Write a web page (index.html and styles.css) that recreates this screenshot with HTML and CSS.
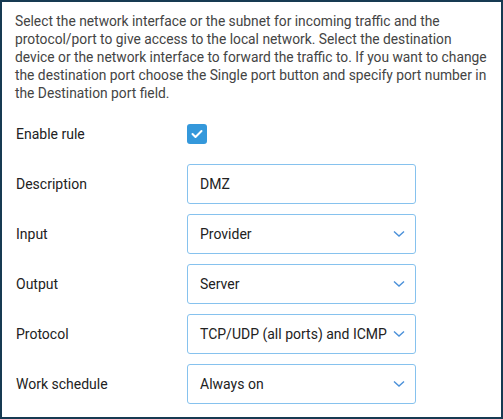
FILE: index.html
```html
<!DOCTYPE html>
<html>
<head>
<meta charset="utf-8">
<link rel="stylesheet" href="styles.css">
</head>
<body>
<div class="frame">
  <p class="intro">Select the network interface or the subnet for incoming traffic and the protocol/port to give access to the local network. Select the destination device or the network interface to forward the traffic to. If you want to change the destination port choose the Single port button and specify port number in the Destination port field.</p>
  <div class="form">
    <div class="row">
      <div class="label">Enable rule</div>
      <div class="field"><span class="check"><svg width="12" height="10" viewBox="0 0 12 10"><path d="M1.5 5 L4.5 8 L10.5 2" fill="none" stroke="#fff" stroke-width="2" stroke-linecap="round" stroke-linejoin="round"/></svg></span></div>
    </div>
    <div class="row">
      <div class="label">Description</div>
      <div class="field"><div class="box">DMZ</div></div>
    </div>
    <div class="row">
      <div class="label">Input</div>
      <div class="field"><div class="box select"><span>Provider</span><svg class="chev" width="12" height="8" viewBox="0 0 12 8"><path d="M1 1.5 L6 6 L11 1.5" fill="none" stroke="#4a90d9" stroke-width="1.4"/></svg></div></div>
    </div>
    <div class="row">
      <div class="label">Output</div>
      <div class="field"><div class="box select"><span>Server</span><svg class="chev" width="12" height="8" viewBox="0 0 12 8"><path d="M1 1.5 L6 6 L11 1.5" fill="none" stroke="#4a90d9" stroke-width="1.4"/></svg></div></div>
    </div>
    <div class="row">
      <div class="label">Protocol</div>
      <div class="field"><div class="box select"><span>TCP/UDP (all ports) and ICMP</span><svg class="chev" width="12" height="8" viewBox="0 0 12 8"><path d="M1 1.5 L6 6 L11 1.5" fill="none" stroke="#4a90d9" stroke-width="1.4"/></svg></div></div>
    </div>
    <div class="row">
      <div class="label">Work schedule</div>
      <div class="field"><div class="box select"><span>Always on</span><svg class="chev" width="12" height="8" viewBox="0 0 12 8"><path d="M1 1.5 L6 6 L11 1.5" fill="none" stroke="#4a90d9" stroke-width="1.4"/></svg></div></div>
    </div>
  </div>
</div>
</body>
</html>
```
FILE: styles.css
```css
html, body {
  margin: 0;
  padding: 0;
  background: #fff;
}
.frame {
  box-sizing: border-box;
  width: 503px;
  height: 419px;
  border: 2px solid #163a52;
  padding: 10px 11px 0 13px;
  font-family: Roboto, "Liberation Sans", sans-serif;
}
.intro {
  margin: 0;
  font-size: 13.8px;
  line-height: 18px;
  color: #444;
}
.form {
  margin-top: 12px;
  display: flex;
  flex-direction: column;
  gap: 10px;
}
.row {
  display: flex;
  align-items: center;
  height: 40px;
}
.label {
  width: 171px;
  padding-left: 1px;
  font-size: 14px;
  color: #222;
}
.field {
  width: 229px;
  display: flex;
  align-items: center;
}
.check {
  width: 20px;
  height: 20px;
  border-radius: 3px;
  background: #3498db;
  display: flex;
  align-items: center;
  justify-content: center;
}
.box {
  box-sizing: border-box;
  width: 229px;
  height: 40px;
  border: 1px solid #86c2ee;
  border-radius: 3px;
  padding: 0 10px 0 12px;
  display: flex;
  align-items: center;
  font-size: 14px;
  color: #222;
}
.select {
  justify-content: space-between;
}
.select span {
  white-space: nowrap;
}
.chev {
  flex: none;
  margin-left: 4px;
}
```
